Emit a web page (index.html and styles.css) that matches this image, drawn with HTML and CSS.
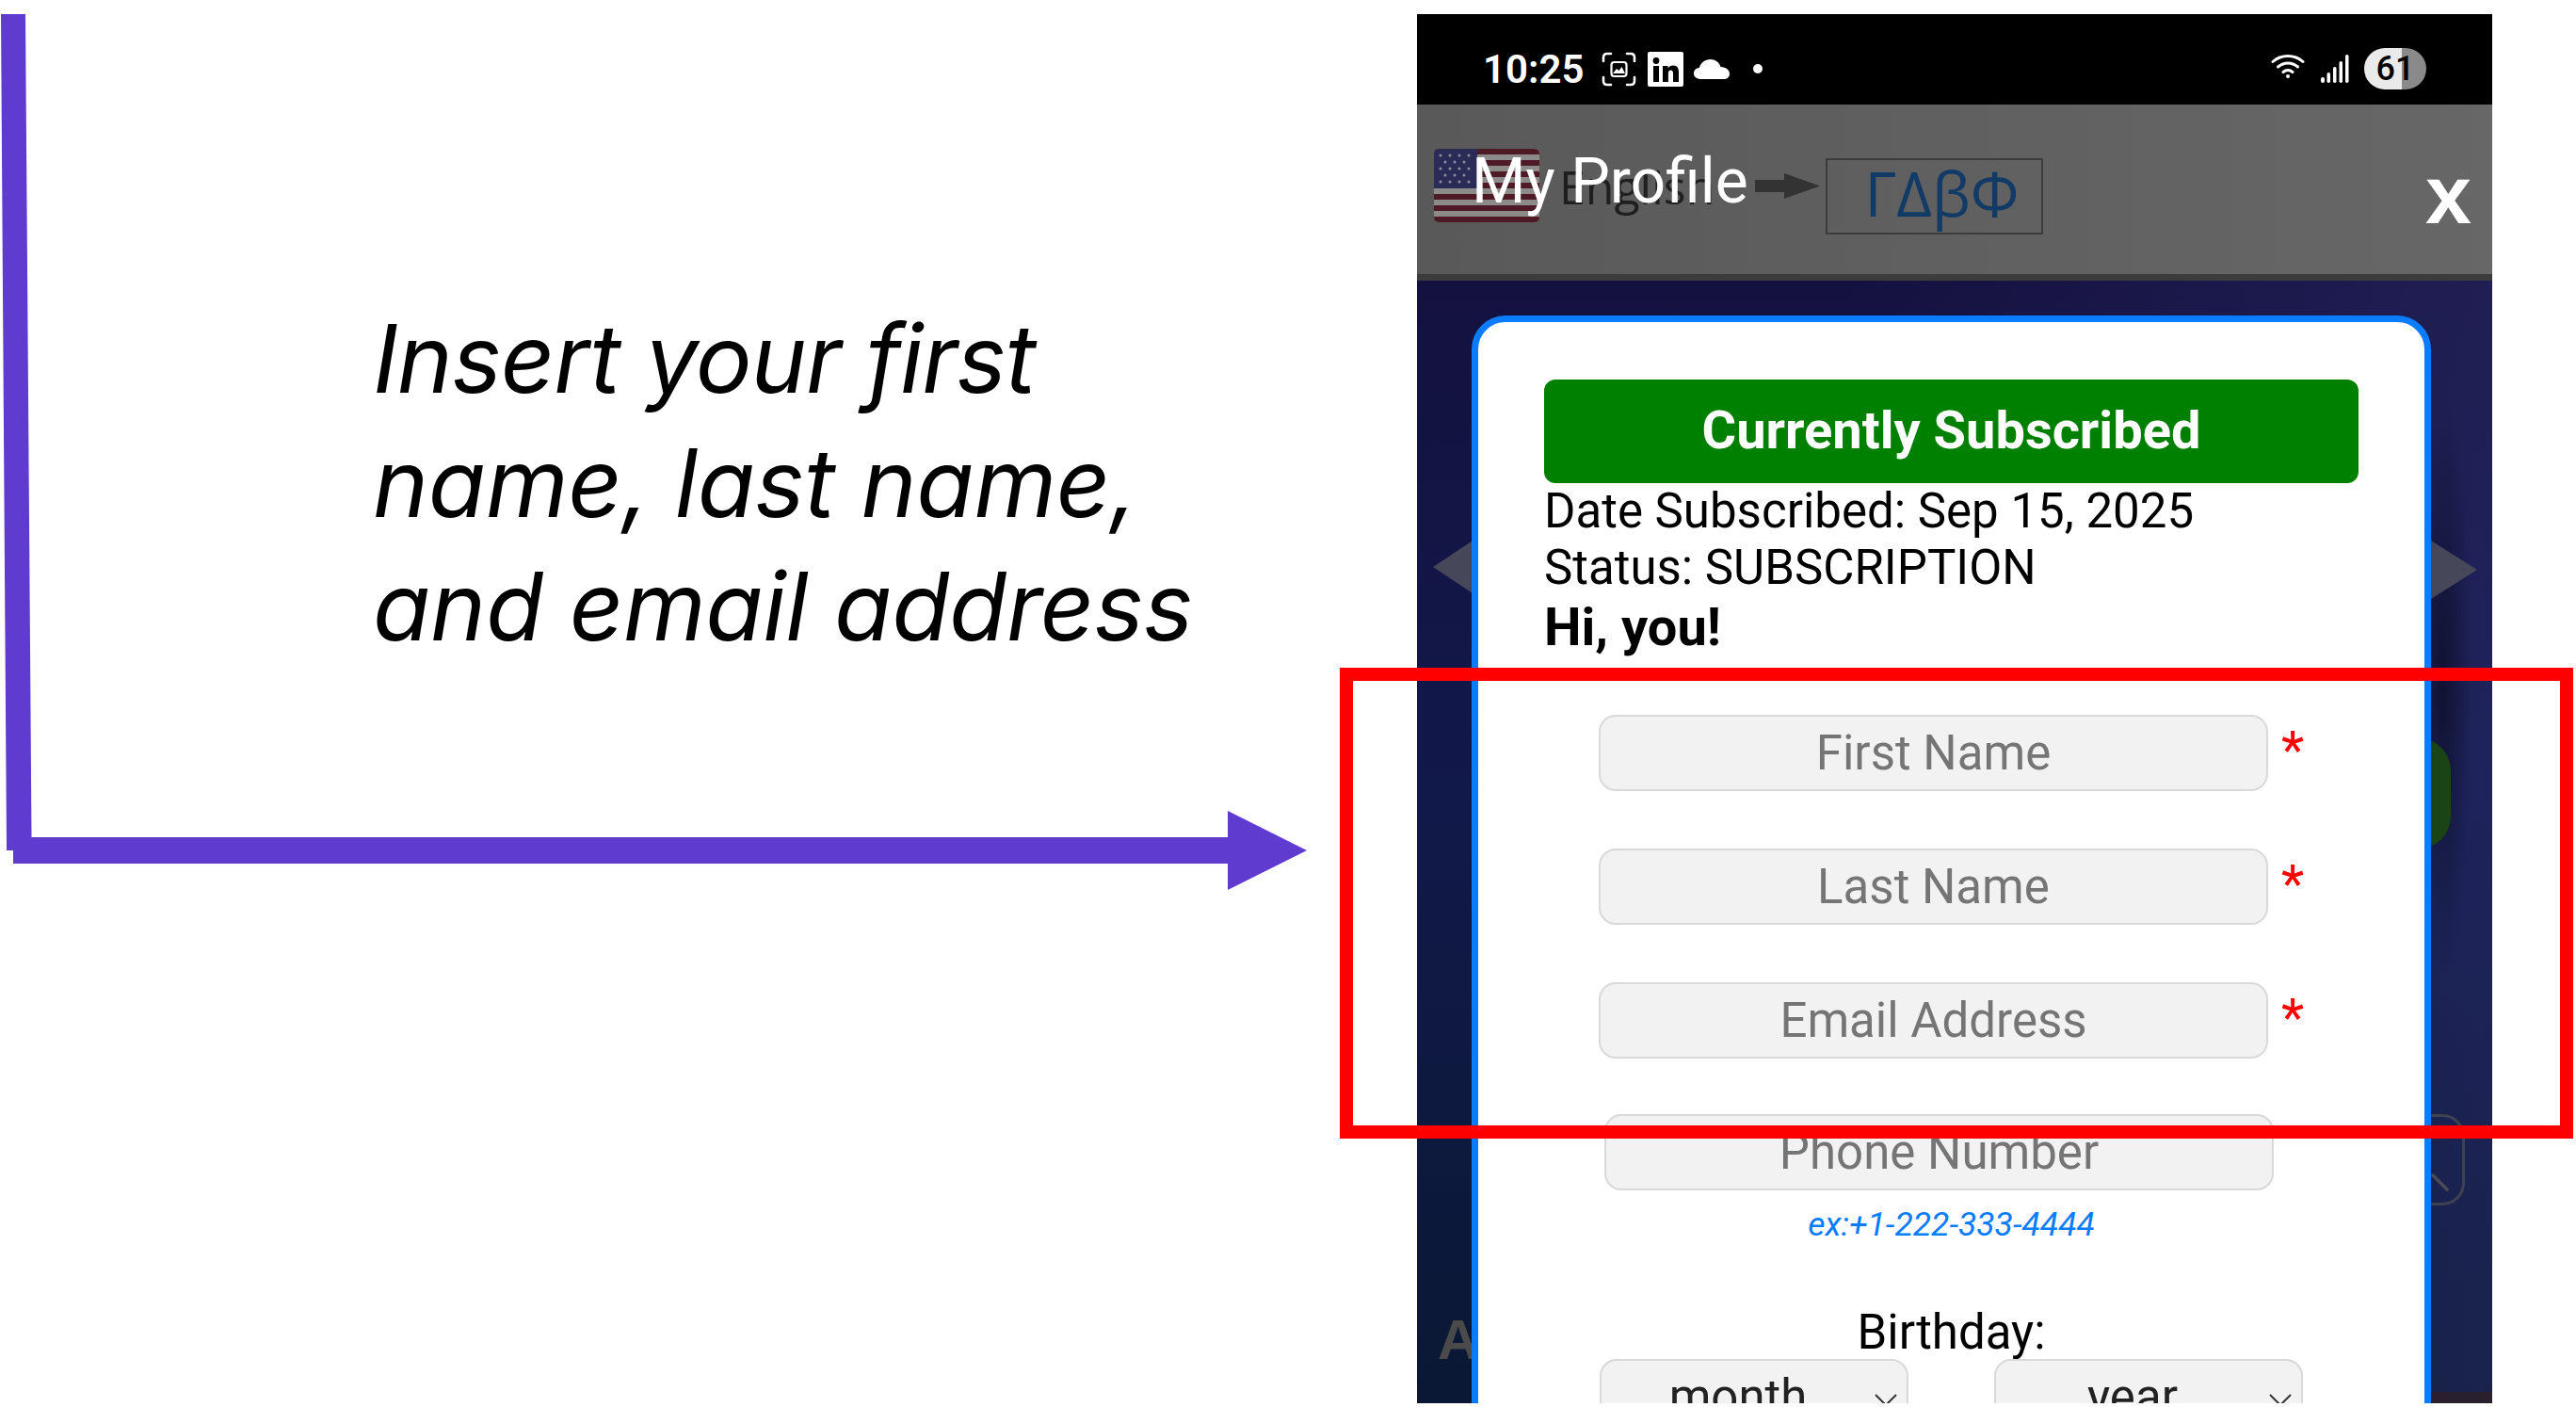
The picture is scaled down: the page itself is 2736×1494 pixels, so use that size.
FILE: index.html
```html
<!DOCTYPE html>
<html lang="en">
<head>
  <meta charset="UTF-8">
  <title>Insert your first name, last name, and email address</title>
  <link rel="stylesheet" href="styles.css">
</head>
<body>
  <div class="slide">
    <div class="caption">
      <p><span class="line-tight">Insert your first</span><br>name, last name,<br>and email address</p>
    </div>

    <div class="phone">
      <div class="status-bar">
        <span class="clock">10:25</span>
        <svg class="icon-shot" viewBox="0 0 37 37" fill="none" stroke="#fff" stroke-width="2.6" stroke-linecap="round">
          <path d="M2 10V6q0-4 4-4h4M27 2h4q4 0 4 4v4M35 27v4q0 4-4 4h-4M10 35H6q-4 0-4-4v-4"/>
          <rect x="10.5" y="11" width="16" height="15" rx="3" stroke-width="2.2"/>
          <path d="M12 23l4-5 2.5 2 3-4 3.5 7z" fill="#fff" stroke="none"/>
        </svg>
        <svg class="icon-linkedin" viewBox="0 0 38 37">
          <rect width="38" height="37" rx="2" fill="#fff"/>
          <circle cx="9" cy="9.5" r="3.4" fill="#000"/>
          <rect x="6" y="15" width="6" height="17" fill="#000"/>
          <path d="M16 15h5.6v2.5c1.2-1.9 3-3 5.400-3 4.500 0 6 2.900 6 7.200V32h-6v-9c0-2.200-.7-3.500-2.500-3.500s-2.600 1.400-2.600 3.500v9H16z" fill="#000"/>
        </svg>
        <svg class="icon-cloud" viewBox="0 0 38 21">
          <path d="M8 21C3 21 0 18.500 0 15c0-3.300 2.500-5.700 5.800-5.900C7.300 3.700 12 0 17.500 0c5.300 0 9.600 3.200 11 8C34 8.300 38 11 38 15.500c0 3.300-2.500 5.500-6 5.500z" fill="#fff"/>
        </svg>
        <span class="dot"></span>
        <div class="status-right">
          <svg class="icon-wifi" viewBox="0 0 36 26" fill="none" stroke="#fff" stroke-width="3" stroke-linecap="round">
            <path d="M2 8.500C11 .5 25 .5 34 8.500"/>
            <path d="M7.500 14C14 8.500 22 8.500 28.500 14"/>
            <path d="M13 19.500c3-2.300 7-2.300 10 0"/>
            <circle cx="18" cy="24" r="2" fill="#fff" stroke="none"/>
          </svg>
          <svg class="icon-signal" viewBox="0 0 30 30" fill="#fff">
            <rect x="0" y="24" width="4" height="6" rx="2"/>
            <rect x="6.500" y="19" width="3.500" height="11" rx="1.700"/>
            <rect x="13" y="13" width="3.500" height="17" rx="1.700"/>
            <rect x="19.500" y="7" width="3.500" height="23" rx="1.700"/>
            <rect x="26" y="0" width="3.500" height="30" rx="1.700"/>
          </svg>
          <span class="battery">61</span>
        </div>
      </div>

      <div class="top-bar">
        <svg class="flag" viewBox="0 0 112 78">
          <rect width="112" height="78" rx="6" fill="#8d8a8a"/>
          <path d="M0 6q0-6 6-6h100q6 0 6 6z" fill="#4d1a26"/>
          <path d="M0 12h112v6H0zM0 24h112v6H0zM0 36h112v6H0zM0 48h112v6H0zM0 60h112v6H0zM0 72h112q0 6-6 6H6q-6 0-6-6z" fill="#4d1a26"/>
          <path d="M0 6q0-6 6-6h40v42H0z" fill="#2b2b57"/>
          <g fill="#8e8e9e">
            <circle cx="7" cy="7" r="1.500"/><circle cx="17" cy="7" r="1.500"/><circle cx="27" cy="7" r="1.500"/><circle cx="37" cy="7" r="1.500"/>
            <circle cx="12" cy="14" r="1.500"/><circle cx="22" cy="14" r="1.500"/><circle cx="32" cy="14" r="1.500"/>
            <circle cx="7" cy="21" r="1.500"/><circle cx="17" cy="21" r="1.500"/><circle cx="27" cy="21" r="1.500"/><circle cx="37" cy="21" r="1.500"/>
            <circle cx="12" cy="28" r="1.500"/><circle cx="22" cy="28" r="1.500"/><circle cx="32" cy="28" r="1.500"/>
            <circle cx="7" cy="35" r="1.500"/><circle cx="17" cy="35" r="1.500"/><circle cx="27" cy="35" r="1.500"/><circle cx="37" cy="35" r="1.500"/>
          </g>
        </svg>
        <span class="lang">English</span>
        <svg class="lang-arrow" viewBox="0 0 69 27"><path d="M0 7h31V0l38 13.500L31 27v-7H0z" fill="#333"/></svg>
        <span class="lang-box">ΓΔβΦ</span>
        <span class="close">x</span>
        <h1 class="title">My Profile</h1>
      </div>

      <div class="content">
        <!-- page behind the modal -->
        <span class="bg-edge"></span>
        <span class="bg-chevron bg-chevron-left"></span>
        <span class="bg-chevron bg-chevron-right"></span>
        <span class="bg-pill"></span>
        <span class="bg-search"></span>
        <svg class="bg-handle" viewBox="0 0 20 20"><path d="M2 2l15 15" stroke="#4a4c58" stroke-width="3.500" stroke-linecap="round"/></svg>
        <span class="bg-letter">A</span>
        <span class="bg-strip"></span>

        <div class="card">
          <div class="sub-banner">Currently Subscribed</div>
          <div class="meta">Date Subscribed: Sep 15, 2025</div>
          <div class="meta">Status: SUBSCRIPTION</div>
          <div class="greeting">Hi, you!</div>

          <form class="profile-form" autocomplete="off">
            <div class="field">
              <input type="text" placeholder="First Name">
              <span class="req">*</span>
            </div>
            <div class="field">
              <input type="text" placeholder="Last Name">
              <span class="req">*</span>
            </div>
            <div class="field">
              <input type="email" placeholder="Email Address">
              <span class="req">*</span>
            </div>
            <div class="field field-phone">
              <input type="tel" placeholder="Phone Number">
            </div>
            <div class="hint">ex:+1-222-333-4444</div>
            <div class="birthday-label">Birthday:</div>
            <div class="birthday">
              <div class="select">month
                <svg class="chev" viewBox="0 0 24 13"><path d="M1 1l11 11L23 1" fill="none" stroke="#333" stroke-width="2"/></svg>
              </div>
              <div class="select">year
                <svg class="chev" viewBox="0 0 24 13"><path d="M1 1l11 11L23 1" fill="none" stroke="#333" stroke-width="2"/></svg>
              </div>
            </div>
          </form>
        </div>
      </div>
    </div>

    <!-- callout drawn over the slide -->
    <svg class="callout-arrow" viewBox="0 0 1388 945">
      <path d="M1 15H27L33.500 889H1304V861L1388 903 1304 945V917H14V903H7z" fill="#5f3bd0"/>
    </svg>
    <div class="callout-box"></div>
  </div>
</body>
</html>
```

FILE: styles.css
```css
* { box-sizing: border-box; }
html, body { margin: 0; }
body {
  background: #fff;
  font-family: Roboto, "Liberation Sans", sans-serif;
  color: #000;
  overflow: hidden;
}
.slide {
  position: relative;
  display: flex;
  width: 2736px;
  height: 1494px;
  padding-top: 15px;
}

/* left caption */
.caption {
  flex: 0 0 1505px;
  padding: 300px 0 0 396px;
}
.caption p {
  margin: 0;
  font-family: Inter, "Liberation Sans", sans-serif;
  font-style: italic;
  font-size: 100px;
  letter-spacing: -0.3px;
  line-height: 131.5px;
  white-space: nowrap;
}
.line-tight { letter-spacing: -1px; }
.callout-arrow {
  position: absolute;
  left: 0;
  top: 0;
  width: 1388px;
  height: 945px;
}
.callout-box {
  position: absolute;
  left: 1423px;
  top: 709px;
  width: 1310px;
  height: 500px;
  border: 14px solid #ff0000;
}

/* phone */
.phone {
  flex: 0 0 1142px;
  height: 1475px;
  display: flex;
  flex-direction: column;
  overflow: hidden;
}
.status-bar {
  flex: 0 0 96px;
  display: flex;
  align-items: center;
  padding: 20px 70px 0;
  background: #000;
  color: #fff;
}
.clock { font-size: 42px; font-weight: 600; width: 107px; }
.icon-shot { width: 37px; height: 37px; margin-left: 19px; }
.icon-linkedin { width: 38px; height: 37px; margin-left: 12px; }
.icon-cloud { width: 38px; height: 21px; margin-left: 11px; }
.dot { width: 10px; height: 10px; margin-left: 25px; border-radius: 50%; background: #fff; }
.status-right { margin-left: auto; display: flex; align-items: center; }
.icon-wifi { width: 36px; height: 26px; margin-top: -6px; }
.icon-signal { width: 30px; height: 30px; margin-left: 17px; }
.battery {
  width: 66px;
  height: 44px;
  margin-left: 16px;
  border-radius: 22px;
  background: linear-gradient(90deg, #eaeaea 60%, #8a8a8a 60%);
  color: #000;
  font-size: 36px;
  font-weight: 500;
  line-height: 44px;
  text-align: center;
}

.top-bar {
  flex: 0 0 187px;
  position: relative;
  display: flex;
  align-items: center;
  padding: 0 0 7px 18px;
  background: linear-gradient(90deg, #595959, #676767);
  border-bottom: 7px solid #3c3c3c;
}
.flag { width: 112px; height: 78px; margin-top: -1px; }
.lang {
  width: 156px;
  margin-left: 21px;
  font-family: "Open Sans", sans-serif;
  font-size: 50px;
  color: #1f1f1f;
}
.lang-arrow { width: 69px; height: 27px; margin-left: 52px; }
.lang-box {
  width: 231px;
  height: 81px;
  margin-left: 6px;
  margin-top: 22px;
  padding-left: 16px;
  border: 2px solid #3c3c3c;
  color: #123a66;
  font-family: "Open Sans", sans-serif;
  font-size: 65px;
  line-height: 70px;
  text-align: center;
}
.close {
  margin-left: auto;
  margin-right: 22px;
  margin-top: 18px;
  color: #fff;
  font-family: "Liberation Sans", sans-serif;
  font-weight: bold;
  font-size: 88px;
  line-height: 88px;
}
.title {
  position: absolute;
  left: 58px;
  top: 42px;
  margin: 0;
  color: #fff;
  font-size: 66px;
  font-weight: 400;
  line-height: 80px;
}

.content {
  flex: 1;
  position: relative;
  overflow: hidden;
  padding: 37px 0 0 58px;
  background:
    linear-gradient(90deg, rgba(10,12,40,0) 40%, rgba(60,60,130,.3) 100%),
    linear-gradient(180deg, #14113f 0%, #11194a 45%, #0a1834 100%);
}
.bg-edge {
  position: absolute;
  left: 1060px;
  top: 120px;
  width: 60px;
  height: 620px;
  background: radial-gradient(closest-side, rgba(8,8,25,.6), rgba(8,8,25,0));
}
.bg-chevron {
  position: absolute;
  background: #47475a;
}
.bg-chevron-left {
  left: 17px;
  top: 264px;
  width: 60px;
  height: 80px;
  clip-path: polygon(0 50%, 100% 0, 100% 100%);
}
.bg-chevron-right {
  left: 1050px;
  top: 259px;
  width: 76px;
  height: 96px;
  clip-path: polygon(100% 50%, 0 0, 0 100%);
}
.bg-pill {
  position: absolute;
  left: 1030px;
  top: 486px;
  width: 68px;
  height: 117px;
  border-radius: 34px;
  background: #1a4416;
}
.bg-search {
  position: absolute;
  left: 1020px;
  top: 885px;
  width: 93px;
  height: 97px;
  border: 3px solid #3f4250;
  border-radius: 24px;
}
.bg-handle {
  position: absolute;
  left: 1077px;
  top: 948px;
  width: 20px;
  height: 20px;
}
.bg-letter {
  position: absolute;
  left: 22px;
  top: 1090px;
  color: #4a4a4a;
  font-family: "Liberation Sans", sans-serif;
  font-weight: bold;
  font-size: 60px;
}
.bg-strip {
  position: absolute;
  left: 1060px;
  right: 0;
  bottom: 0;
  height: 12px;
  background: #2a1f2c;
}

.card {
  position: relative;
  width: 1019px;
  height: 1400px;
  padding: 61px 70px 0;
  background: #fff;
  border: 7px solid #0a7cff;
  border-radius: 36px 36px 0 0;
}
.sub-banner {
  height: 110px;
  background: #008000;
  border-radius: 12px;
  color: #fff;
  font-size: 56px;
  font-weight: bold;
  line-height: 109px;
  text-align: center;
}
.meta {
  font-size: 51px;
  line-height: 60px;
}
.greeting {
  font-size: 56px;
  font-weight: bold;
  line-height: 66px;
}

.profile-form { margin-top: 60px; }
.field {
  display: flex;
  height: 81px;
  margin: 0 0 61px 58px;
}
.field input {
  width: 711px;
  height: 81px;
  padding: 0 10px;
  background: #f2f2f2;
  border: 2px solid #d9d9d9;
  border-radius: 18px;
  font-family: Roboto, sans-serif;
  font-size: 51px;
  text-align: center;
  outline: none;
}
.field input::placeholder { color: #757575; opacity: 1; }
.req {
  margin: 10px 0 0 14px;
  color: #ff0000;
  font-size: 56px;
  line-height: 56px;
}
.field-phone { margin: -2px 0 2px 64px; }
.hint {
  margin-top: 15px;
  color: #0a7cff;
  font-size: 35.5px;
  font-style: italic;
  line-height: 42px;
  text-align: center;
}
.birthday-label {
  margin-top: 64px;
  font-size: 51px;
  line-height: 60px;
  text-align: center;
}
.birthday {
  display: flex;
  justify-content: center;
  gap: 91px;
  margin-top: -2px;
}
.select {
  position: relative;
  width: 328px;
  height: 81px;
  padding-right: 34px;
  background: #f2f2f2;
  border: 2px solid #d9d9d9;
  border-radius: 18px;
  color: #222;
  font-size: 51px;
  line-height: 77px;
  text-align: center;
}
.chev {
  position: absolute;
  right: 10px;
  top: 35px;
  width: 24px;
  height: 13px;
}
```
